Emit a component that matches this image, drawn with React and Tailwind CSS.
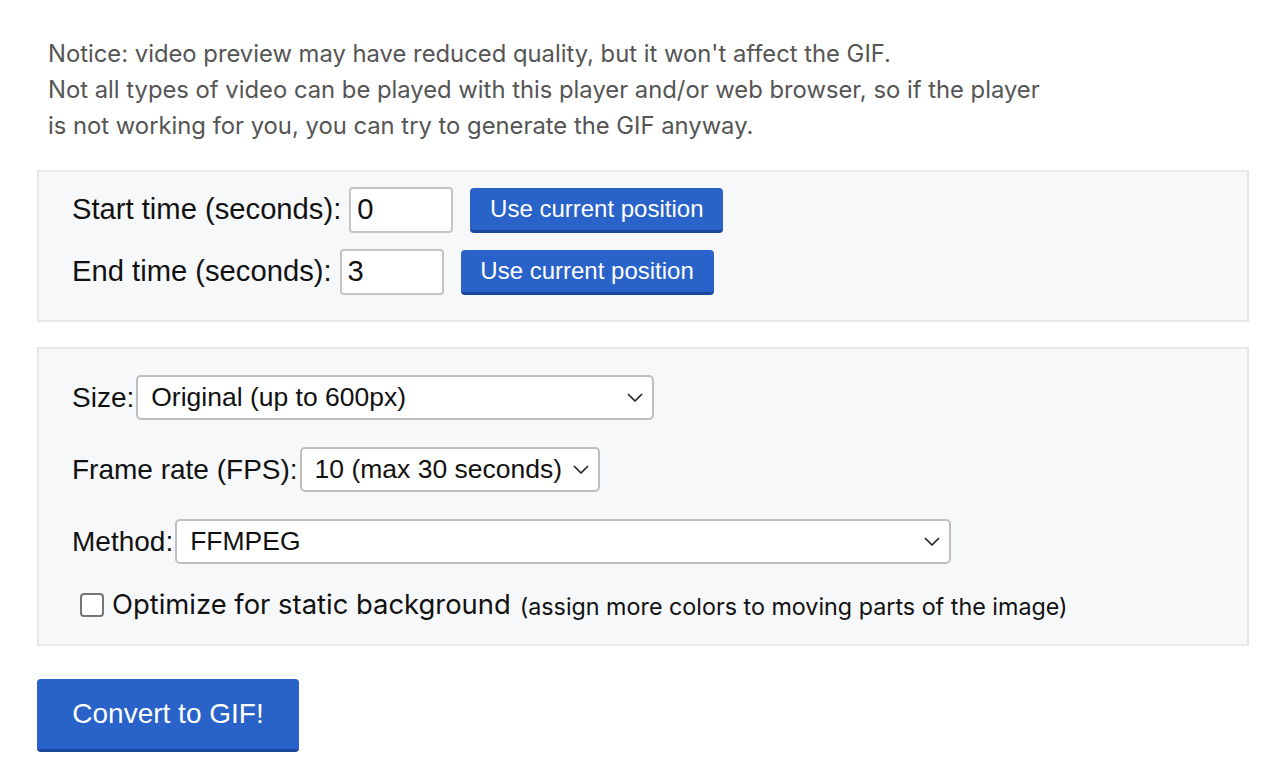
import React from 'react';

const Chevron = () => (
  <svg width="16" height="10" viewBox="0 0 16 10" fill="none" className="shrink-0">
    <path d="M1.5 1.5 L8 8 L14.5 1.5" stroke="#222" strokeWidth="1.7" strokeLinecap="round" strokeLinejoin="round" />
  </svg>
);

const Select = ({ value, width }) => (
  <div
    className={`flex items-center justify-between h-[45px] bg-white border-2 border-[#bfbfbf] rounded-[5px] pl-[13px] pr-[9px] text-[26.5px] text-[#111] ${width}`}
  >
    <span>{value}</span>
    <Chevron />
  </div>
);

const BlueButton = ({ children, className }) => (
  <button
    className={`bg-[#2962c9] text-white rounded-[4px] border-b-[3px] border-[#1b479b] ${className}`}
  >
    {children}
  </button>
);

const TimeRow = ({ label, value }) => (
  <div className="flex items-center">
    <span>{label}</span>
    <div className="ml-[8px] w-[104px] h-[46px] bg-white border-2 border-[#c4c4c4] rounded-[4px] flex items-center px-[6px]">
      {value}
    </div>
    <BlueButton className="ml-[17px] w-[253px] h-[45px] text-[24px]">Use current position</BlueButton>
  </div>
);

export default function App() {
  return (
    <div className="min-h-screen bg-white px-[37px] pt-[36px] text-[#111]" style={{ fontFamily: '"Liberation Sans", Arial, sans-serif' }}>
      <div className="pl-[11px] text-[23.8px] leading-[36px] text-[#555] font-['Inter',sans-serif]">
        <p>Notice: video preview may have reduced quality, but it won't affect the GIF.</p>
        <p>
          Not all types of video can be played with this player and/or web browser, so if the player
          <br />
          is not working for you, you can try to generate the GIF anyway.
        </p>
      </div>

      <div className="mt-[26px] w-[1212px] bg-[#f7f8fa] border-2 border-[#e6e7e9] pl-[33px] pt-[15px] pb-[25px] text-[29.2px] flex flex-col gap-[16px]">
        <TimeRow label="Start time (seconds):" value="0" />
        <TimeRow label="End time (seconds):" value="3" />
      </div>

      <div className="mt-[25px] w-[1212px] bg-[#f7f8fa] border-2 border-[#e6e7e9] pl-[33px] pt-[26px] pb-[21px] text-[28px] flex flex-col gap-[27px]">
        <div className="flex items-center">
          <span className="mr-[2px]">Size:</span>
          <Select value="Original (up to 600px)" width="w-[518px]" />
        </div>
        <div className="flex items-center">
          <span className="mr-[2px]">Frame rate (FPS):</span>
          <Select value="10 (max 30 seconds)" width="w-[300px]" />
        </div>
        <div className="flex items-center">
          <span className="mr-[2px]">Method:</span>
          <Select value="FFMPEG" width="w-[776px]" />
        </div>
        <label className="flex items-center h-[36px] leading-none pl-[8px] -mt-[4px] font-['Inter',sans-serif]">
          <span className="w-[24px] h-[24px] border-2 border-[#767676] rounded-[4px] bg-white shrink-0" />
          <span className="ml-[8px] text-[27.4px]">Optimize for static background</span>
          <span className="ml-[9px] text-[23.3px] mt-[3px]">(assign more colors to moving parts of the image)</span>
        </label>
      </div>

      <BlueButton className="mt-[33px] w-[262px] h-[73px] text-[28px]">Convert to GIF!</BlueButton>
    </div>
  );
}
